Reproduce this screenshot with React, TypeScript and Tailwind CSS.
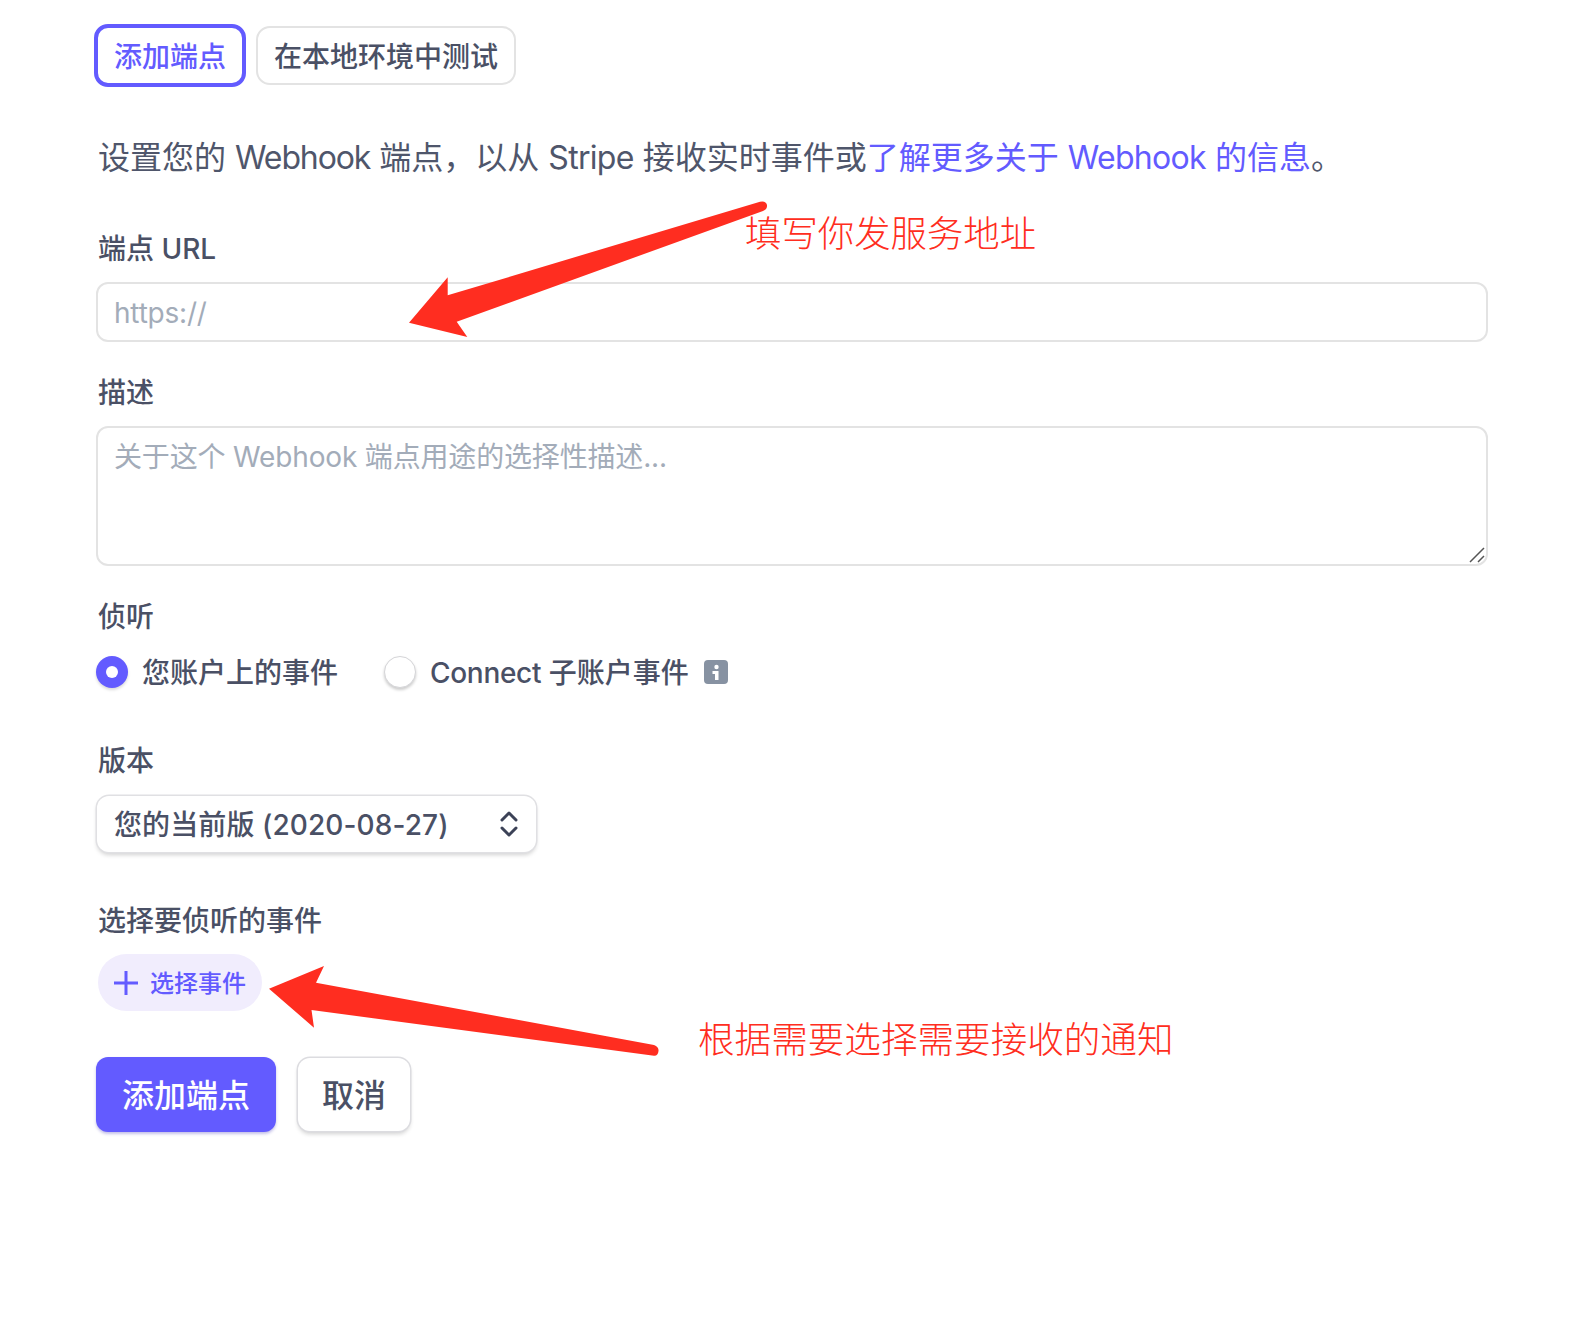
const FONT = "font-['Inter','Noto_Sans_CJK_SC',sans-serif]";

function FieldLabel({ children, className }: { children: string; className: string }) {
  return <div className={`h-8 text-[28px] leading-[34px] font-medium text-[#4a5065] ${className}`}>{children}</div>;
}

function InfoIcon() {
  return (
    <svg width="24" height="24" viewBox="0 0 24 24" className="ml-[15px]">
      <rect width="24" height="24" rx="4" fill="#8792a2" />
      <circle cx="12.5" cy="7" r="2.2" fill="#fff" />
      <path d="M8.5 11h6v9h-3.5v-6h-2.5z" fill="#fff" />
    </svg>
  );
}

function Arrows() {
  return (
    <svg width="1594" height="1342" viewBox="0 0 1594 1342" className="absolute left-0 top-0 pointer-events-none">
      <path
        d="M409 322.7L447.7 277.3V295.3L760 201.7Q766 200.5 767 205Q767.5 209.5 763 211L456.7 321.7L467.3 337Z"
        fill="#ff2d20"
      />
      <path
        d="M269 988.7L324 966L316 982.7L654 1045Q659 1047 658.5 1051Q658 1056 654 1055.7L311.5 1010L314 1027.7Z"
        fill="#ff2d20"
      />
    </svg>
  );
}

export default function App() {
  return (
    <div className={`relative min-h-[1342px] bg-white pl-[96px] pt-6 ${FONT}`}>
      <div className="-ml-[2px] flex h-[63px] items-center gap-[10px]">
        <button className="flex h-[63px] w-[152px] items-center justify-center rounded-[14px] border-4 border-[#635bff] pt-[2px] text-[28px] font-medium text-[#635bff]">
          添加端点
        </button>
        <button className="flex h-[59px] w-[260px] items-center justify-center rounded-[14px] border-2 border-[#e3e3e3] pt-[2px] text-[28px] font-medium text-[#4a5065]">
          在本地环境中测试
        </button>
      </div>

      <p className="mt-[50px] h-10 whitespace-nowrap pl-[2px] text-[32px] leading-[42px] text-[#4f566b]">
        设置您的 <span className="tracking-[-1.1px]">Webhook</span> 端点，以从 <span className="tracking-[-0.7px]">Stripe</span> 接收实时事件或
        <span className="text-[#635bff]">
          了解更多关于 <span className="tracking-[-0.7px]">Webhook</span> 的信息
        </span>
        。
      </p>

      <FieldLabel className="mt-[55px] pl-[2px]">端点 URL</FieldLabel>
      <input
        placeholder="https://"
        className="mt-[18px] block h-[60px] w-[1392px] rounded-xl border-2 border-[#e3e3e3] px-4 pt-px text-[28px] tracking-[-0.2px] placeholder:text-[#a3acb9]"
      />

      <FieldLabel className="mt-[34px] pl-[2px]">描述</FieldLabel>
      <div className="relative mt-[18px] h-[140px] w-[1392px]">
        <textarea
          placeholder="关于这个 Webhook 端点用途的选择性描述..."
          className="block h-full w-full resize-none rounded-xl border-2 border-[#e3e3e3] px-4 pb-3 pt-[13px] text-[28px] leading-8 tracking-[-0.16px] placeholder:text-[#a3acb9]"
        />
        <svg width="18" height="18" viewBox="0 0 18 18" className="absolute bottom-[2px] right-[2px]">
          <path d="M2 16L16 2M10 16L16 10" stroke="#555" strokeWidth="1.5" fill="none" />
        </svg>
      </div>

      <FieldLabel className="mt-[34px] pl-[2px]">侦听</FieldLabel>
      <div className="mt-6 flex h-8 items-center text-[28px] font-medium text-[#4a5065]">
        <div className="flex h-8 w-8 items-center justify-center rounded-full bg-[#635bff] shadow-[0_2px_3px_rgba(0,0,0,0.15)]">
          <div className="h-3 w-3 rounded-full bg-white" />
        </div>
        <span className="ml-[14px] pt-[2px]">您账户上的事件</span>
        <div className="ml-[46px] h-8 w-8 rounded-full border border-[#d5d5d8] bg-white shadow-[0_2px_3px_rgba(0,0,0,0.2)]" />
        <span className="ml-[14px] pt-[2px]">
          <span className="tracking-[-0.3px]">Connect</span> 子账户事件
        </span>
        <InfoIcon />
      </div>

      <FieldLabel className="mt-[56px] pl-[2px]">版本</FieldLabel>
      <button className="ml-[1px] mt-5 flex h-[56px] w-[439px] items-center justify-between rounded-xl bg-white pl-[17px] pr-[17px] text-[28px] font-medium tracking-[0.1px] text-[#4a5065] shadow-[0_0_0_1.5px_#e0e0e3,0_3px_4px_rgba(0,0,0,0.18)]">
        <span className="pt-[2px]">您的当前版 (2020-08-27)</span>
        <svg width="20" height="28" viewBox="0 0 20 28" fill="none" stroke="#3c4257" strokeWidth="3" strokeLinecap="round" strokeLinejoin="round">
          <path d="M3 10l7-7 7 7M3 18l7 7 7-7" />
        </svg>
      </button>

      <FieldLabel className="mt-[52px] pl-[2px]">选择要侦听的事件</FieldLabel>
      <button className="ml-[2px] mt-[18px] flex h-[57px] w-[164px] items-center rounded-full bg-[#f1edfd] pl-4 text-2xl font-medium text-[#635bff]">
        <svg width="24" height="24" viewBox="0 0 24 24" stroke="#635bff" strokeWidth="3" className="shrink-0">
          <path d="M12 0V24M0 12H24" />
        </svg>
        <span className="ml-3 pt-[2px]">选择事件</span>
      </button>

      <div className="mt-[46px] flex items-center gap-[22px]">
        <button className="flex h-[75px] w-[180px] items-center justify-center rounded-xl bg-[#635bff] pt-[2px] text-[32px] font-medium text-white shadow-[0_2px_3px_rgba(60,50,180,0.3)]">
          添加端点
        </button>
        <button className="flex h-[73px] w-[112px] items-center justify-center rounded-xl bg-white pt-[2px] text-[32px] font-medium text-[#4a5065] shadow-[0_0_0_1.5px_#dcdce0,0_3px_4px_rgba(0,0,0,0.18)]">
          取消
        </button>
      </div>

      <Arrows />
      <div className="absolute left-[745px] top-[211px] whitespace-nowrap text-[36.4px] font-light leading-[46px] text-[#ff2d20]">
        填写你发服务地址
      </div>
      <div className="absolute left-[698px] top-[1017px] whitespace-nowrap text-[36.6px] font-light leading-[46px] text-[#ff2d20]">
        根据需要选择需要接收的通知
      </div>
    </div>
  );
}
